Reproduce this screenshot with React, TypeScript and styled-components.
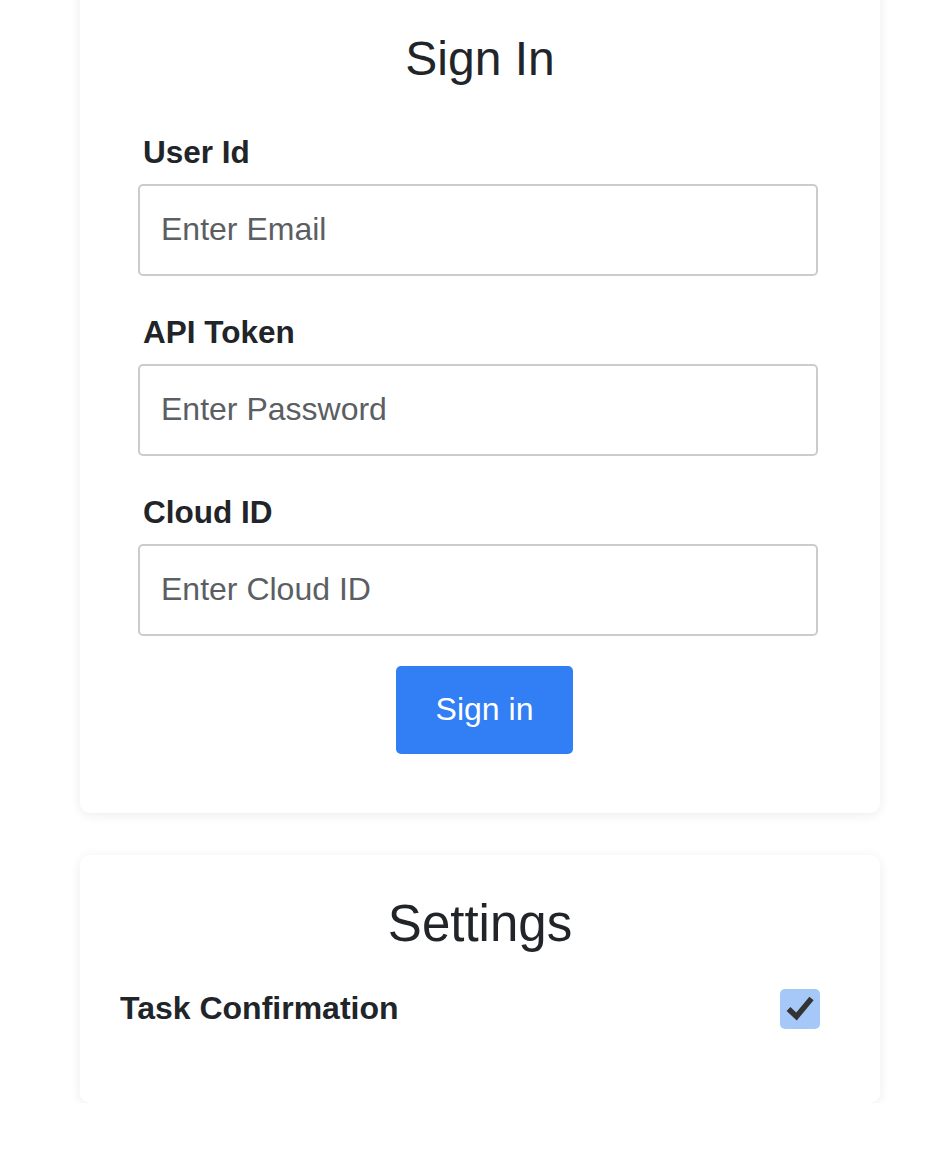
import React from 'react';
import styled, { createGlobalStyle } from 'styled-components';

const GlobalStyle = createGlobalStyle`
  html, body {
    margin: 0;
    padding: 0;
    background: #ffffff;
  }
  body {
    font-family: "Liberation Sans", Arial, Helvetica, sans-serif;
    color: #212529;
    overflow: hidden;
  }
`;

const Page = styled.div`
  width: 944px;
  display: flex;
  flex-direction: column;
  align-items: flex-start;
  padding-left: 80px;
  box-sizing: border-box;
`;

const Card = styled.section<{ $first?: boolean }>`
  width: 800px;
  box-sizing: border-box;
  background: #ffffff;
  border-radius: 10px;
  box-shadow: 0 2px 12px rgba(0, 0, 0, 0.08);
  margin-top: ${props => (props.$first ? '-20px' : '42px')};
  padding: ${props => (props.$first ? '50px 0 59px 58px' : '38px 60px 74px 40px')};
`;

const Title = styled.h2<{ $size: number; $shift?: number }>`
  margin: 0;
  font-weight: 400;
  font-size: ${props => props.$size}px;
  line-height: 1.2;
  text-align: center;
  color: #212529;
  margin-left: ${props => props.$shift ?? 0}px;
`;

const Form = styled.form`
  width: 680px;
  margin-top: 46px;
  display: flex;
  flex-direction: column;
`;

const Field = styled.div`
  display: flex;
  flex-direction: column;

  & + & {
    margin-top: 38px;
  }
`;

const Label = styled.label`
  font-size: 31.5px;
  line-height: 36px;
  font-weight: 700;
  color: #212529;
  margin: 0 0 14px 5px;
`;

const Input = styled.input`
  height: 92px;
  box-sizing: border-box;
  border: 2px solid #cccccc;
  border-radius: 5px;
  padding: 0 21px;
  font-family: "Liberation Sans", Arial, Helvetica, sans-serif;
  font-size: 32px;
  color: #212529;
  outline: none;

  &::placeholder {
    color: #5b5e62;
  }
`;

const ButtonRow = styled.div`
  display: flex;
  justify-content: center;
  padding-left: 13px;
  margin-top: 30px;
`;

const Button = styled.button`
  width: 177px;
  height: 88px;
  border: none;
  border-radius: 5px;
  background: #317ef5;
  color: #ffffff;
  font-family: "Liberation Sans", Arial, Helvetica, sans-serif;
  font-size: 32px;
  cursor: pointer;
`;

const SettingRow = styled.div`
  margin-top: 35px;
  display: flex;
  align-items: center;
  justify-content: space-between;
`;

const SettingLabel = styled.span`
  font-size: 32px;
  font-weight: 700;
  color: #212529;
`;

const CheckBox = styled.span`
  width: 40px;
  height: 40px;
  border-radius: 5px;
  background: #a5c8f8;
  display: flex;
  align-items: center;
  justify-content: center;
`;

export default function App() {
  return (
    <>
      <GlobalStyle />
      <Page>
        <Card $first>
          <Title $size={48} $shift={-58}>Sign In</Title>
          <Form onSubmit={e => e.preventDefault()}>
            <Field>
              <Label>User Id</Label>
              <Input placeholder="Enter Email" />
            </Field>
            <Field>
              <Label>API Token</Label>
              <Input type="password" placeholder="Enter Password" />
            </Field>
            <Field>
              <Label>Cloud ID</Label>
              <Input placeholder="Enter Cloud ID" />
            </Field>
            <ButtonRow>
              <Button type="submit">Sign in</Button>
            </ButtonRow>
          </Form>
        </Card>
        <Card>
          <Title $size={51} $shift={20}>Settings</Title>
          <SettingRow>
            <SettingLabel>Task Confirmation</SettingLabel>
            <CheckBox>
              <svg width="40" height="40" viewBox="0 0 40 40">
                <polyline
                  points="8.5,20 16.5,27.5 31.5,9.5"
                  fill="none"
                  stroke="#333333"
                  strokeWidth="5.5"
                  strokeLinejoin="miter"
                />
              </svg>
            </CheckBox>
          </SettingRow>
        </Card>
      </Page>
    </>
  );
}
